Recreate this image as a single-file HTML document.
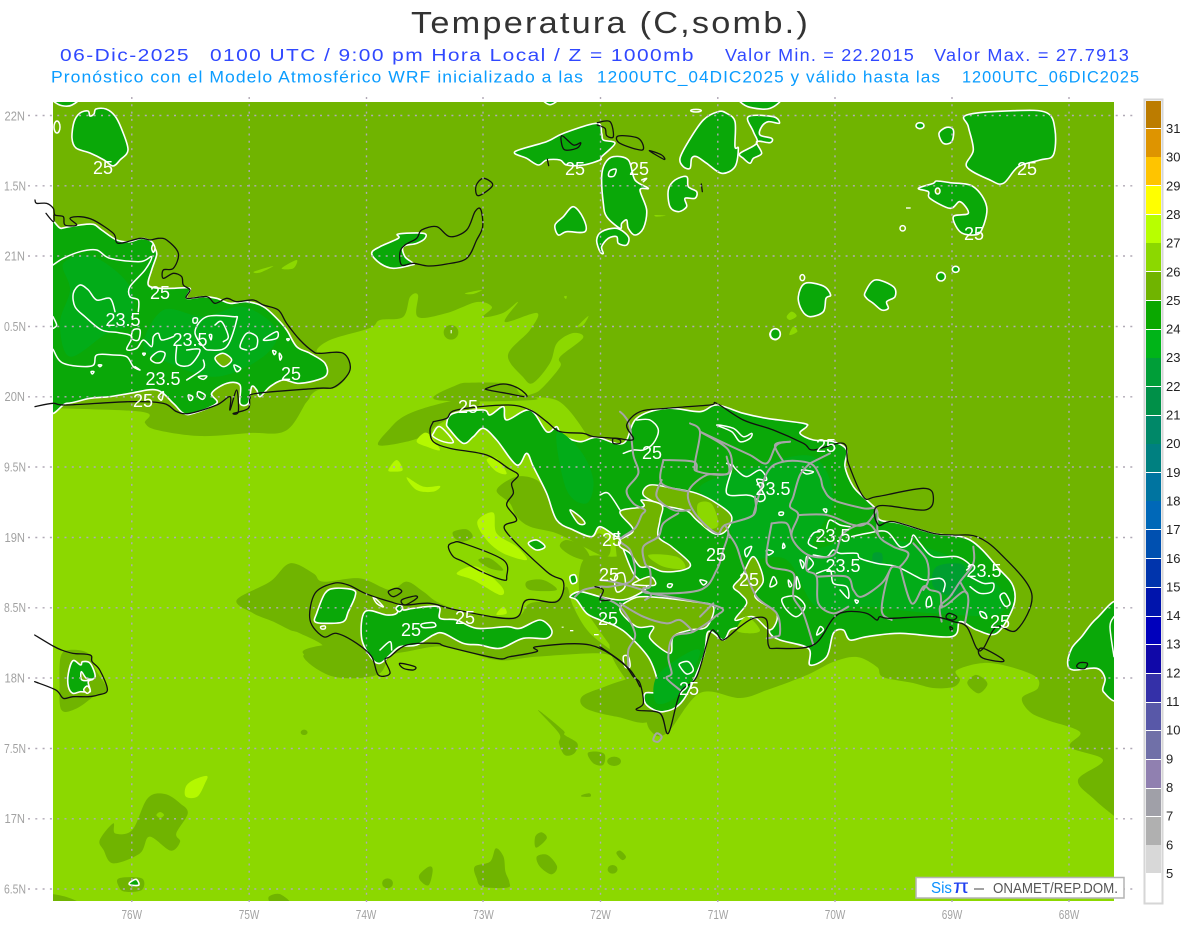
<!DOCTYPE html>
<html>
<head>
<meta charset="utf-8">
<title>Temperatura (C,somb.)</title>
<style>
html,body{margin:0;padding:0;background:#fff;width:1200px;height:927px;overflow:hidden}
svg{display:block}
svg *{vector-effect:non-scaling-stroke}
text{font-family:"Liberation Sans",sans-serif;vector-effect:none}
.m{fill:#70b400}
.l{fill:#8cd800}
.b{fill:#b4f800}
.gr{fill:#0aa808;stroke:#fff;stroke-width:1.6;stroke-linejoin:round}
.s1{fill:#02ac18}
.s2{fill:#009e30}
.w{fill:none;stroke:#fff;stroke-width:1.5;stroke-linejoin:round;stroke-linecap:round}
.mw{fill:#70b400;stroke:#fff;stroke-width:1.5;stroke-linejoin:round}
.k{fill:none;stroke:#111;stroke-width:1.3;stroke-linejoin:round;stroke-linecap:round}
.g{fill:none;stroke:#a6a6a6;stroke-width:2;stroke-linejoin:round;stroke-linecap:round}
.lab{fill:#fff;font-size:18px;text-anchor:middle}
.ax{fill:#a2a2a2;font-size:12.5px}
.cb{fill:#222;font-size:13px}
</style>
</head>
<body>
<svg width="1200" height="927" viewBox="0 0 1200 927" xmlns="http://www.w3.org/2000/svg">
<defs><clipPath id="plot"><rect x="53" y="102" width="1061" height="799"/></clipPath></defs>
<rect width="1200" height="927" fill="#fff"/>

<text x="411" y="33" font-size="31" fill="#333" letter-spacing="2" textLength="399" lengthAdjust="spacingAndGlyphs">Temperatura (C,somb.)</text>
<g font-size="17.5" fill="#3048ff" letter-spacing="1.2">
<text x="60" y="61" textLength="130" lengthAdjust="spacingAndGlyphs">06-Dic-2025</text>
<text x="210" y="61" textLength="485" lengthAdjust="spacingAndGlyphs">0100 UTC / 9:00 pm Hora Local / Z = 1000mb</text>
<text x="725" y="61" textLength="190" lengthAdjust="spacingAndGlyphs">Valor Min. = 22.2015</text>
<text x="934" y="61" textLength="196" lengthAdjust="spacingAndGlyphs">Valor Max. = 27.7913</text>
</g>
<g font-size="16.8" fill="#0a9cff" letter-spacing="1">
<text x="51" y="82.5" textLength="533" lengthAdjust="spacingAndGlyphs">Pronóstico con el Modelo Atmosférico WRF inicializado a las</text>
<text x="597" y="82.5" textLength="344" lengthAdjust="spacingAndGlyphs">1200UTC_04DIC2025 y válido hasta las</text>
<text x="962" y="82.5" textLength="178" lengthAdjust="spacingAndGlyphs">1200UTC_06DIC2025</text>
</g>

<g clip-path="url(#plot)">
<rect x="53" y="102" width="1061" height="799" class="m"/>
<polygon class="l" points="5,405 53,408 143,412 145,423 157,430 200,436 250,433 287,430 313,393 337,387 350,370 343,353 317,352 330,340 370,328 380,320 403,317 410,297 418,295 418,317 447,313 477,302 492,307 483,317 503,313 518,302 505,322 537,313 530,330 508,355 523,377 533,383 550,363 557,343 573,333 583,338 560,357 560,367 540,390 527,397 560,402 590,440 610,480 615,540 620,600 610,650 640,700 650,730 667,733 700,693 740,698 767,690 807,675 833,662 857,657 877,667 883,677 913,683 933,688 953,687 960,680 957,670 990,663 1033,675 1038,688 1022,698 1030,712 1047,720 1080,732 1070,747 1103,760 1078,780 1095,800 1125,825 1190,880 1190,915 5,915 5,700"/>

<!-- patches : frame 8 -->
<g transform="translate(290 400) scale(.33333)">
<polygon class="m" points="265,135 300,85 340,50 400,25 500,0 560,0 560,20 470,60 430,85 420,100 350,125"/>
<polygon class="m" points="0,-10 60,-10 0,50"/>
<polygon class="m" points="-160,600 -60,545 0,490 70,520 100,545 210,535 300,570 350,545 400,575 450,610 560,645 680,650 720,610 800,600 830,560 850,620 900,700 1000,780 930,760 740,770 620,780 470,740 350,755 300,770 260,825 130,830 40,770 100,740 30,700 0,690 -50,665 -110,640"/>
<polygon class="m" points="620,270 680,230 740,240 770,280 790,320 840,370 900,410 930,400 960,430 950,470 880,440 800,400 720,380 680,350 660,310"/>
<polygon class="m" points="830,420 880,440 900,480 850,470 810,440"/>
<polygon class="m" points="710,545 760,540 800,570 720,570"/>
<polygon class="m" points="880,480 960,470 1050,500 1050,780 1000,780 920,680 870,590"/>
<polygon class="m" points="490,395 530,388 548,410 520,425 495,415"/>
<polygon class="m" points="565,480 600,475 640,510 600,505"/>
<polygon class="b" points="380,125 400,100 420,105 450,150 410,140"/>
<polygon class="b" points="295,210 320,180 338,210 310,215"/>
<polygon class="b" points="350,232 400,260 450,258 430,275 380,270"/>
<polygon class="b" points="562,365 610,338 620,400 680,440 710,480 640,460 590,420"/>
<polygon class="b" points="500,520 560,500 635,560 630,585 550,540"/>
<polygon class="b" points="620,640 640,620 650,640 625,645"/>
<polygon class="b" points="590,180 620,175 650,220 620,215"/>
</g>

<!-- patches : frame 10 -->
<g transform="translate(50 640) scale(.3827 .33333)">
<polygon class="m" points="28,50 50,30 100,40 120,90 150,150 120,165 70,205 30,210 25,130"/>
<polygon class="m" points="130,600 165,550 170,580 215,570 255,475 300,462 340,490 360,520 330,580 340,605 315,632 260,590 235,640 165,670 140,630"/>
<polygon class="l" points="278,525 288,516 298,525 288,534"/>
<polygon class="b" points="355,440 375,420 410,408 405,430 385,470 355,470"/>
<polygon class="m" points="180,715 240,715 240,750 195,755 180,740"/>
<polygon class="m" points="-20,762 40,770 80,795 -20,795"/>
<polygon class="m" points="572,770 600,762 628,790 580,790"/>
<ellipse class="m" cx="664" cy="277" rx="9" ry="8"/>
<polygon class="m" points="1275,210 1340,270 1345,285 1378,310 1370,340 1345,345 1330,310 1330,280"/>
<polygon class="m" points="1405,340 1430,335 1450,345 1445,375 1420,370"/>
<ellipse class="m" cx="1474" cy="364" rx="18" ry="14"/>
<polygon class="m" points="1390,465 1410,460 1412,470 1390,470"/>
<polygon class="m" points="1268,590 1285,577 1298,595 1270,623"/>
<polygon class="m" points="1272,650 1300,645 1325,680 1310,703 1280,680"/>
<polygon class="m" points="1480,640 1490,632 1505,650 1495,660"/>
<ellipse class="m" cx="1470" cy="688" rx="13" ry="13"/>
<polygon class="m" points="1110,680 1150,665 1165,625 1185,650 1190,695 1200,725 1195,743 1130,740 1115,715"/>
<polygon class="m" points="965,705 990,680 1000,690 990,735 970,725"/>
<ellipse class="m" cx="882" cy="730" rx="14" ry="15"/>
<polygon class="m" points="660,35 770,10 830,40 840,80 800,107 750,95"/>
<polygon class="m" points="1390,170 1450,140 1500,120 1568,100 1568,240 1480,230 1400,205"/>
</g>

<!-- patches : frames 7, 9, 11, 12 -->
<g transform="translate(840 560) scale(.33333)">
<polygon class="m" points="382,370 405,345 430,355 442,375 415,400"/>
</g>
<g transform="translate(360 100) scale(.33333)">
<polygon class="m" points="230,900 290,855 340,848 450,852 480,880 520,900"/>
<circle class="m" cx="273" cy="697" r="22"/>
<rect x="272" y="690" width="3" height="10" fill="#fff"/>
<polygon class="l" points="315,580 365,570 340,582"/>
<polygon class="l" points="652,680 685,648 670,675"/>
<polygon class="l" points="885,345 918,347 890,350"/>
<polygon class="l" points="612,590 620,588 618,597"/>
</g>
<g transform="translate(760 100) scale(.33333)">
<polygon class="l" points="80,650 95,635 110,648 90,660"/>
<polygon class="l" points="88,705 100,680 112,695"/>
</g>
<g transform="translate(30 190) scale(.33333)">
<polygon class="l" points="672,245 730,228 690,248"/>
<polygon class="l" points="755,235 800,210 790,235"/>
</g>

<!-- top-left blobs -->
<polygon class="gr" points="72,138 74,122 80,113 88,111 90,116 94,114 96,109 106,109 115,116 122,130 128,150 120,160 113,166 104,160 90,153 76,148"/>
<polygon class="gr" points="50,96 56,103 64,106 72,105 78,98"/>
<ellipse class="w" cx="57" cy="127" rx="3" ry="6"/>

<!-- Cuba -->
<g transform="translate(30 190) scale(.33333)">
<polygon class="gr" points="50,130 95,115 150,105 190,103 215,120 260,150 300,155 335,145 365,155 375,175 380,195 365,240 355,285 390,295 430,295 480,295 470,325 520,320 560,325 600,340 650,335 700,350 740,385 770,420 800,470 840,490 885,520 885,560 810,580 760,570 720,590 690,620 680,600 665,590 655,640 630,640 630,585 590,580 545,610 560,640 490,670 460,670 430,640 380,600 300,610 240,620 180,625 110,640 50,630"/>
<polygon class="s1" points="100,220 190,200 300,290 300,400 230,430 120,500 90,400 120,300"/>
<polygon class="s1" points="400,360 520,380 640,350 740,420 700,500 560,560 420,520 340,470"/>
<polygon class="mw" points="365,175 370,163 375,175 370,187"/>
<polygon class="mw" points="555,505 580,490 605,510 580,530"/>
<polyline class="w" points="69,225 100,205 150,185 200,180 240,205 330,215 365,200 345,240 300,290 300,320 325,330 325,365"/>
<polyline class="w" points="255,365 240,325 200,330 175,300 150,285 130,310 135,350 165,380 215,420 265,428 305,440 290,478 320,475 340,450 365,470 370,440 385,430 395,450 430,440"/>
<polygon class="w" points="310,420 330,420 325,450 305,445"/>
<polyline class="w" points="69,478 100,520 185,528 200,495 250,495 290,500 310,530 330,540 315,530"/>
<polyline class="w" points="440,470 440,520 480,525 510,480 470,480"/>
<polyline class="w" points="520,510 520,535 470,570"/>
<polygon class="w" points="362,505 385,485 405,490 395,515 375,518"/>
<polygon class="w" points="530,380 610,380 620,390 590,470 540,480 520,470 495,425"/>
<polyline class="w" points="555,405 575,395 595,440 580,455"/>
<polyline class="w" points="650,480 630,470 650,430 680,440 680,470 662,480"/>
<polygon class="w" points="700,450 740,425 740,445"/>
<polygon class="w" points="490,385 502,385 500,398 490,398"/>
<polygon class="w" points="538,435 545,435 543,450"/>
<polygon class="w" points="612,525 632,535 620,545"/>
<polygon class="w" points="505,560 530,558 520,568"/>
<polygon class="w" points="505,605 525,615 518,628 503,618"/>
<polygon class="w" points="475,615 488,620 485,630 478,630"/>
<polygon class="w" points="728,482 738,485 733,494"/>
<polygon class="w" points="748,490 755,500 750,510"/>
<polygon class="w" points="770,447 778,447 774,452"/>
<polygon class="w" points="385,620 400,605 395,630"/>
<polygon class="w" points="338,490 346,490 342,496"/>
<polygon class="w" points="205,525 215,525 210,530"/>
<polygon class="w" points="183,545 192,545 187,552"/>
<polyline class="w" points="69,380 80,405 70,415"/>
</g>

<!-- Hispaniola main -->
<g transform="translate(600 400) scale(.33333)">
<polygon class="gr" points="-460,70 -440,40 -350,30 -330,45 -290,20 -280,60 -210,30 -160,95 -130,80 -115,105 -60,125 -10,112 70,130 110,55 200,25 300,35 350,15 430,40 500,55 610,70 620,80 600,100 640,120 700,125 740,150 735,200 760,260 800,300 830,330 840,360 900,370 1000,400 1110,420 1200,510 1240,560 1240,620 1190,700 1130,690 1080,665 1055,710 900,700 800,710 750,720 730,690 700,700 680,770 630,795 625,745 540,720 510,700 505,670 460,655 420,680 390,690 370,720 325,695 310,770 250,900 190,935 140,915 135,880 175,870 150,780 90,710 50,680 0,660 -40,640 -70,600 -90,590 -60,575 0,590 60,600 100,590 140,560 100,520 60,420 55,395 50,410 0,380 -25,410 -80,390 -130,360 -160,280 -200,200 -220,160 -250,195 -310,120 -350,85 -380,110 -410,130 -450,90"/>
<polygon class="s1" points="300,260 470,200 640,170 700,300 640,440 800,410 1000,450 1180,540 1200,640 1000,640 800,620 650,620 560,480 430,470 370,340"/>
<polygon class="s2" points="1010,500 1090,495 1085,555 1060,590 1000,560"/>
<polygon class="s2" points="820,460 845,460 845,490 820,490"/>
<polygon class="s1" points="170,830 260,760 300,760 240,880 170,910"/>
<polygon class="s1" points="-130,100 -60,150 -20,240 -40,310 -100,270"/>

<polygon class="mw" points="130,285 150,255 220,265 290,280 350,310 395,350 375,395 340,400 290,360 265,335 230,325 185,315"/>
<polygon class="mw" points="60,335 130,320 125,300 185,315 180,360 175,410 215,440 270,490 250,510 190,515 150,500 120,500 90,460 60,440 60,420 100,390"/>
<polygon class="l" points="295,310 335,312 355,375 320,385 295,350"/>
<polygon class="l" points="145,465 230,470 255,505 190,500"/>
<polygon class="mw" points="90,600 140,590 280,605 340,620 320,680 270,690 220,710 210,760 150,715 160,680 110,680 60,630"/>
<polygon class="mw" points="405,660 440,610 420,580 400,560 425,530 460,470 490,540 465,590 530,640 510,690 460,650"/>
<polygon class="l" points="410,690 440,650 480,690 450,700"/>
<polygon class="mw" points="70,770 85,770 90,800 75,800"/>
<polygon class="mw" points="100,550 150,530 165,555 110,555"/>

<polygon class="w" points="350,75 395,95 420,125 450,115 455,100 430,110 400,85"/>
<polyline class="w" points="380,190 395,205 380,280 440,285 460,290 480,305 495,290 470,240 500,240 480,210 440,230 410,210 395,190"/>
<polygon class="w" points="605,210 640,215 620,222"/>
<polyline class="w" points="680,385 690,360 720,375 750,380"/>
<polyline class="w" points="650,445 625,430 640,400 660,395"/>
<polyline class="w" points="640,465 680,470 700,450 720,460 770,460 780,475 830,490 890,500 950,530 975,540 1020,535 1035,550 1030,575"/>
<polyline class="w" points="755,410 800,400 860,395 900,440 930,430 940,405 960,430 1000,470 1070,470 1110,495 1100,510"/>
<polyline class="w" points="1110,530 1150,550 1180,550 1175,575 1140,580 1110,560"/>
<polyline class="w" points="650,520 690,510 700,550 740,560 745,595 720,570"/>
<polygon class="w" points="1200,590 1215,580 1230,610 1215,618"/>
<polygon class="w" points="980,600 990,590 995,615 980,620"/>
<polygon class="w" points="1140,635 1155,640 1160,655 1145,650"/>
<polygon class="w" points="560,590 590,590 615,620 590,650 560,630 545,600"/>
<polygon class="w" points="660,680 670,690 650,705"/>
<polygon class="w" points="240,790 265,785 280,810 260,822 240,800"/>
<polygon class="w" points="435,450 455,440 440,470"/>
<polygon class="w" points="300,540 320,545 310,555"/>
<polygon class="w" points="205,552 217,553 212,562 203,560"/>
<polygon class="w" points="600,480 612,490 608,505"/>
<polygon class="w" points="620,470 640,490 620,510"/>
<polygon class="w" points="520,530 530,550 510,560"/>
<polygon class="w" points="565,540 575,555 568,560"/>
<polygon class="w" points="590,530 600,560 590,565"/>
<polygon class="w" points="550,430 555,440 548,445"/>
<polygon class="w" points="500,450 520,455 505,465"/>
<polygon class="w" points="670,328 680,328 678,338"/>
<polygon class="w" points="538,337 550,337 548,345 538,345"/>
<polygon class="w" points="765,600 775,603 770,610"/>
<polyline class="w" points="70,160 100,150 130,150 160,130 175,90 150,60 110,60"/>
<polyline class="w" points="0,285 25,280 60,330"/>
<polygon class="w" points="45,530 70,520 75,560 50,575"/>
</g>

<!-- Haiti south peninsula & north bits -->
<g transform="translate(290 400) scale(.33333)">
<polygon class="gr" points="75,665 80,640 105,580 135,565 190,570 195,590 175,635 160,665 110,670"/>
<polygon class="gr" points="215,715 225,635 290,645 320,640 330,615 340,630 370,625 445,620 450,655 500,660 560,685 650,680 690,685 750,660 785,690 770,715 700,715 630,745 570,735 520,730 460,700 430,705 380,735 330,740 300,765 270,790 245,775"/>
<polygon class="gr" points="715,430 740,420 765,440 740,450"/>
<polygon class="gr" points="840,530 855,525 860,545 845,550"/>
<polygon class="mw" points="840,330 870,350 885,370 865,370"/>
<polygon class="w" points="430,100 450,80 490,125 460,125 430,110"/>
<polygon class="w" points="250,590 280,620 260,610"/>
<polygon class="gr" points="318,625 330,615 338,625 328,635"/>
<polygon class="w" points="92,680 105,678 105,686 95,687"/>
<polygon class="w" points="395,672 430,668 435,680 400,683"/>
<polyline class="w" points="270,750 300,725 305,750"/>
<rect x="815" y="680" width="6" height="3" fill="#fff"/>
<rect x="840" y="690" width="10" height="4" fill="#fff"/>
<rect x="912" y="702" width="14" height="4" fill="#fff"/>
</g>

<!-- northern islands -->
<g transform="translate(360 100) scale(.33333)">
<polygon class="gr" points="35,460 60,440 115,415 115,402 190,400 195,415 170,430 130,440 135,470 160,490 155,495 100,505 60,490"/>
<polygon class="gr" points="465,155 560,125 610,100 710,70 725,100 730,120 765,130 725,170 720,180 670,195 620,195 600,180 560,180 535,195 500,175"/>
<polygon class="gr" points="725,230 735,190 760,170 805,180 825,240 865,265 840,270 860,330 850,385 825,405 805,385 800,360 785,370 780,385 740,350 730,310"/>
<polygon class="gr" points="710,420 725,395 770,385 805,410 800,435 775,430 770,410 745,415 725,440 730,460 720,455"/>
<polygon class="gr" points="585,375 610,350 640,320 670,355 675,395 620,395 595,405"/>
<polygon class="gr" points="925,270 945,240 980,230 985,260 1010,275 1005,295 975,295 980,320 955,335 930,320"/>
<polygon class="gr" points="960,175 985,125 1030,60 1075,35 1100,40 1125,65 1125,140 1135,145 1125,200 1085,220 1040,190 1010,170 995,175 990,205 970,200"/>
<polygon class="gr" points="1130,-15 1260,-10 1230,25 1170,22 1140,5"/>
<polygon class="gr" points="1165,50 1240,50 1258,70 1225,65 1205,80 1200,105 1235,115 1230,128 1190,125 1205,160 1180,175 1170,190 1150,175 1140,160 1190,130 1180,95"/>
<polygon class="gr" points="1230,700 1245,687 1260,700 1250,718 1235,715"/>
<polygon class="gr" points="540,-15 605,-15 570,14"/>
<ellipse class="w" cx="1008" cy="32" rx="16" ry="4"/>
<polygon class="w" points="750,212 768,208 762,228 746,228"/>
<polyline class="w" points="845,240 860,235 850,245"/>
</g>
<g transform="translate(760 100) scale(.33333)">
<polygon class="gr" points="620,45 760,32 860,38 885,90 880,165 840,180 775,200 730,250 690,240 620,200 640,150 625,80"/>
<polygon class="gr" points="475,265 520,250 530,243 570,248 640,260 680,320 665,390 640,405 600,395 580,350 625,340 600,305 570,325 510,295 505,275"/>
<polygon class="gr" points="537,100 560,82 580,90 575,125 550,130"/>
<polygon class="gr" points="115,590 135,550 190,558 212,585 198,595 190,635 150,650 125,630"/>
<polygon class="gr" points="315,578 345,540 400,560 405,590 380,605 385,625 365,630 340,610 320,595"/>
<ellipse class="gr" cx="480" cy="77" rx="12" ry="9"/>
<ellipse class="mw" cx="533" cy="273" rx="7" ry="9"/>
<ellipse class="mw" cx="428" cy="385" rx="8" ry="8"/>
<ellipse class="gr" cx="543" cy="530" rx="13" ry="13"/>
<ellipse class="gr" cx="587" cy="508" rx="10" ry="9"/>
<ellipse class="mw" cx="127" cy="533" rx="7" ry="9"/>
<ellipse class="gr" cx="46" cy="702" rx="15" ry="16"/>
<rect x="438" y="322" width="14" height="4" fill="#fff"/>
</g>
<!-- right edge -->
<g transform="translate(840 560) scale(.33333)">
<polygon class="gr" points="840,135 770,175 725,230 695,265 683,310 700,330 770,325 795,355 790,395 840,405"/>
<polyline class="w" points="822,170 810,200 822,290"/>
<polygon class="k" points="710,318 720,308 742,310 735,325 718,325"/>
</g>
<!-- Jamaica -->
<g transform="translate(50 640) scale(.3827 .33333)">
<polygon class="gr" points="48,100 60,62 80,75 85,65 105,70 118,110 100,125 105,155 80,155 60,160 48,140"/>
<polygon class="mw" points="88,150 97,138 105,150 98,160"/>
<polygon class="mw" points="82,95 95,115 112,118 95,122 82,118"/>
<polygon class="gr" points="208,728 225,718 232,735 210,735"/>
</g>
</g>

<!-- provincial borders -->
<g transform="translate(600 400) scale(.33333)">
<polyline class="g" points="60,35 75,50 90,80 100,165 115,220 80,270 100,310 135,330 125,345 105,385 60,420 90,450 105,510 90,545 30,560 0,560 -50,570 -75,590"/>
<polyline class="g" points="270,70 300,95 285,190 295,215 385,220 385,150 300,95"/>
<polyline class="g" points="300,95 385,135 450,165 500,190 530,135 570,125"/>
<polyline class="g" points="380,170 385,220 320,225 265,275 285,340 350,400 375,375 460,345 465,290"/>
<polyline class="g" points="190,180 280,185 290,210"/>
<polyline class="g" points="190,180 185,250 265,275"/>
<polyline class="g" points="185,240 170,290 220,330 270,330"/>
<polyline class="g" points="235,340 190,370 175,410 130,440 135,490 150,510 150,560 130,565 150,580 300,570 350,510 370,450 385,400 375,375"/>
<polyline class="g" points="385,400 410,440 430,500 470,590 530,640 540,700 525,710 500,715"/>
<polyline class="g" points="460,345 500,220 550,185 630,190 660,230 670,265 700,300 790,325 830,330 835,405 880,440 925,460 900,500 870,510 845,630 875,660"/>
<polyline class="g" points="550,185 525,135 570,125"/>
<polyline class="g" points="630,190 660,175 690,160"/>
<polyline class="g" points="630,190 600,225 580,290 570,320 595,345 575,410 625,465 700,465 730,400 800,370 835,405"/>
<polyline class="g" points="595,345 680,345 760,375 800,370 830,330"/>
<polyline class="g" points="515,370 560,370 575,410"/>
<polyline class="g" points="515,370 500,460 510,500 580,520 580,590 610,640 640,735"/>
<polyline class="g" points="625,465 620,510 650,530 655,610 700,640 745,620"/>
<polyline class="g" points="650,530 740,530 760,570 785,590 845,550 870,510"/>
<polyline class="g" points="900,500 935,610 970,560 990,570 1020,580 1030,620 1090,575 1105,600 1095,670"/>
<polyline class="g" points="940,430 980,480 985,540 970,570"/>
<polyline class="g" points="1120,440 1120,490 1080,545 1050,590 1020,620 1025,665"/>
<polyline class="g" points="1080,545 1100,580"/>
<polyline class="g" points="0,540 60,550 150,580 135,600"/>
<polyline class="g" points="150,580 355,620 345,650 280,695 220,710 205,770 215,820 200,835 240,870"/>
<polyline class="g" points="60,610 130,650 200,670 240,660 280,695"/>
<polyline class="g" points="340,610 300,650"/>
<polyline class="g" points="0,590 60,620 105,700 85,750 85,800"/>
<polygon class="g" points="160,1020 170,1000 185,1010 175,1025"/>
</g>

<!-- coasts -->
<g transform="translate(30 190) scale(.33333)">
<polyline class="k" points="15,650 69,640 110,645 300,635 400,640 440,665 480,670 560,645 600,620 600,660 620,600 625,665 610,670 655,655 660,625 680,610 860,595 915,590 960,540 940,490 870,490 850,485 810,450 770,400 745,360 700,345 670,330 620,335 590,325 555,340 530,320 470,325 480,300 460,285 455,260 430,250 400,265 400,240 430,235 445,190 410,150 385,145 360,150 330,145 265,160 250,130 190,90 150,80 120,85 140,105 105,105 100,80 75,75 70,55 50,40 20,40 15,30"/>
<polyline class="k" points="48,70 70,95 72,75"/>
</g>
<g transform="translate(600 400) scale(.33333)">
<polyline class="k" points="-500,65 -460,55 -430,30 -280,15 -210,30 -160,65 -120,95 -50,100 -20,110 50,115 100,118 80,75 120,35 200,25 330,15 350,10 430,60 520,90 610,130 640,150 730,130 745,190 790,290 830,290 970,265 1000,290 975,330 835,318 835,375 880,365 1000,400 1060,405 1130,410 1200,460 1295,580 1250,690 1190,680 1150,745 1130,745 1100,680 1060,665 1000,650 870,655 840,650 830,660 800,640 740,635 700,655 640,735 530,745 505,735 500,660 460,655 420,680 370,720 350,700 330,700 290,830 240,880 205,1000 180,940 110,930 130,910 120,850 100,830 70,790 0,740"/>
<polygon class="k" points="1135,755 1150,745 1205,775 1205,785 1150,775"/>
<polygon class="k" points="1040,645 1050,640 1070,650 1060,660 1040,655"/>
<polygon class="k" points="1050,680 1058,685 1052,690"/>
<polygon class="k" points="40,115 60,120 60,130 40,130"/>
</g>
<g transform="translate(290 400) scale(.33333)">
<polyline class="k" points="1050,860 1010,800 900,735 740,740 740,755 660,770 620,775 470,740 440,730 350,735 300,770 285,780 300,820 265,825 245,770 200,730 140,700 100,710 60,660 75,580 130,550 175,555 225,580 300,605 345,615 420,610 500,630 670,655 710,600 800,605 820,545 770,515 645,390 680,360 650,315 670,280 665,250 685,225 655,205 590,165 480,145 430,125 420,90 430,65"/>
<polygon class="k" points="475,440 490,428 520,430 640,480 650,530 640,540 575,515 520,485 490,470"/>
<polygon class="k" points="295,575 320,565 335,575 310,590"/>
<polygon class="k" points="335,600 375,588 380,595 345,615"/>
<polygon class="k" points="330,790 375,800 370,810 340,805"/>
<polyline class="k" points="915,560 940,570 930,600 960,600"/>
</g>
<g transform="translate(360 100) scale(.33333)">
<polygon class="k" points="120,457 135,435 170,415 185,390 230,380 270,410 320,390 345,335 362,328 368,380 350,420 320,475 260,492 205,498 160,490 125,495"/>
<polygon class="k" points="348,258 370,235 398,256 355,287"/>
<polygon class="k" points="605,107 640,135 662,128 650,145 612,148"/>
<polyline class="k" points="712,68 750,65 760,110 740,107 735,85 712,75"/>
<polygon class="k" points="775,108 835,115 847,150 780,130"/>
<polygon class="k" points="868,152 905,165 912,178"/>
<polyline class="k" points="562,178 566,197"/>
<polyline class="k" points="1024,252 1027,275"/>
<polygon class="k" points="380,865 430,852 475,865 500,890 440,880 385,870"/>
</g>
<g transform="translate(50 640) scale(.3827 .33333)">
<polyline class="k" points="-40,-15 8,18 30,30 60,40 105,45 110,65 130,90 150,150 125,165 100,170 60,170 35,175 15,150 -40,125"/>
</g>

<!-- dotted grid -->
<g stroke="#b0a9b6" stroke-width="1.4" stroke-dasharray="2 5.3" fill="none">
<path d="M28 115.5H1134M28 185.8H1134M28 256H1134M28 326.5H1134M28 396.8H1134M28 467H1134M28 537.5H1134M28 607.8H1134M28 678H1134M28 748.5H1134M28 818.8H1134M28 889H1134"/>
<path d="M131.8 97V907M249.2 97V907M366.5 97V907M483 97V907M600.5 97V907M717.8 97V907M835 97V907M952 97V907M1069 97V907"/>
</g>

<!-- contour labels -->
<g>
<text class="lab" x="103" y="174">25</text>
<text class="lab" x="160" y="299">25</text>
<text class="lab" x="143" y="407">25</text>
<text class="lab" x="291" y="380">25</text>
<text class="lab" x="123" y="326">23.5</text>
<text class="lab" x="190" y="346">23.5</text>
<text class="lab" x="163" y="385">23.5</text>
<text class="lab" x="575" y="175">25</text>
<text class="lab" x="639" y="175">25</text>
<text class="lab" x="1027" y="175">25</text>
<text class="lab" x="974" y="240">25</text>
<text class="lab" x="468" y="413">25</text>
<text class="lab" x="652" y="459">25</text>
<text class="lab" x="826" y="452">25</text>
<text class="lab" x="773" y="495">23.5</text>
<text class="lab" x="833" y="542">23.5</text>
<text class="lab" x="843" y="572">23.5</text>
<text class="lab" x="984" y="577">23.5</text>
<text class="lab" x="612" y="546">25</text>
<text class="lab" x="716" y="561">25</text>
<text class="lab" x="609" y="581">25</text>
<text class="lab" x="749" y="586">25</text>
<text class="lab" x="608" y="625">25</text>
<text class="lab" x="1000" y="628">25</text>
<text class="lab" x="689" y="695">25</text>
<text class="lab" x="411" y="636">25</text>
<text class="lab" x="465" y="624">25</text>
</g>

<!-- axes -->
<g class="ax">
<text x="4.5" y="120.5" textLength="20.5" lengthAdjust="spacingAndGlyphs">22N</text>
<text x="4" y="190.5" textLength="22" lengthAdjust="spacingAndGlyphs">1.5N</text>
<text x="4.5" y="260.5" textLength="20.5" lengthAdjust="spacingAndGlyphs">21N</text>
<text x="4" y="331" textLength="22" lengthAdjust="spacingAndGlyphs">0.5N</text>
<text x="4.5" y="401" textLength="20.5" lengthAdjust="spacingAndGlyphs">20N</text>
<text x="4" y="471.5" textLength="22" lengthAdjust="spacingAndGlyphs">9.5N</text>
<text x="4.5" y="542" textLength="20.5" lengthAdjust="spacingAndGlyphs">19N</text>
<text x="4" y="612" textLength="22" lengthAdjust="spacingAndGlyphs">8.5N</text>
<text x="4.5" y="682.5" textLength="20.5" lengthAdjust="spacingAndGlyphs">18N</text>
<text x="4" y="753" textLength="22" lengthAdjust="spacingAndGlyphs">7.5N</text>
<text x="4.5" y="823" textLength="20.5" lengthAdjust="spacingAndGlyphs">17N</text>
<text x="4" y="893.5" textLength="22" lengthAdjust="spacingAndGlyphs">6.5N</text>
</g>
<g class="ax">
<text x="121.5" y="919" textLength="20.5" lengthAdjust="spacingAndGlyphs">76W</text>
<text x="238.8" y="919" textLength="20.5" lengthAdjust="spacingAndGlyphs">75W</text>
<text x="355.8" y="919" textLength="20.5" lengthAdjust="spacingAndGlyphs">74W</text>
<text x="473.3" y="919" textLength="20.5" lengthAdjust="spacingAndGlyphs">73W</text>
<text x="590.3" y="919" textLength="20.5" lengthAdjust="spacingAndGlyphs">72W</text>
<text x="707.8" y="919" textLength="20.5" lengthAdjust="spacingAndGlyphs">71W</text>
<text x="824.8" y="919" textLength="20.5" lengthAdjust="spacingAndGlyphs">70W</text>
<text x="941.8" y="919" textLength="20.5" lengthAdjust="spacingAndGlyphs">69W</text>
<text x="1058.8" y="919" textLength="20.5" lengthAdjust="spacingAndGlyphs">68W</text>
</g>

<!-- colour bar -->
<rect x="1144.5" y="99.5" width="18" height="804" fill="#fff" stroke="#d6d6d6" stroke-width="2"/>
<g>
<rect x="1146" y="101" width="15" height="27" fill="#bc7c00"/>
<rect x="1146" y="129" width="15" height="28" fill="#de9400"/>
<rect x="1146" y="157" width="15" height="28" fill="#ffc400"/>
<rect x="1146" y="186" width="15" height="28" fill="#ffff00"/>
<rect x="1146" y="215" width="15" height="28" fill="#b8ff00"/>
<rect x="1146" y="243" width="15" height="28" fill="#8cd800"/>
<rect x="1146" y="272" width="15" height="28" fill="#70b400"/>
<rect x="1146" y="301" width="15" height="28" fill="#0aa800"/>
<rect x="1146" y="330" width="15" height="28" fill="#00b418"/>
<rect x="1146" y="358" width="15" height="28" fill="#009e38"/>
<rect x="1146" y="387" width="15" height="28" fill="#009048"/>
<rect x="1146" y="416" width="15" height="28" fill="#008868"/>
<rect x="1146" y="444" width="15" height="28" fill="#008080"/>
<rect x="1146" y="473" width="15" height="28" fill="#0074a0"/>
<rect x="1146" y="501" width="15" height="28" fill="#0068b8"/>
<rect x="1146" y="530" width="15" height="28" fill="#0050b0"/>
<rect x="1146" y="559" width="15" height="28" fill="#0034ac"/>
<rect x="1146" y="588" width="15" height="28" fill="#0014ac"/>
<rect x="1146" y="617" width="15" height="27" fill="#0000bc"/>
<rect x="1146" y="645" width="15" height="28" fill="#1008a8"/>
<rect x="1146" y="674" width="15" height="28" fill="#3430a8"/>
<rect x="1146" y="703" width="15" height="27" fill="#5858a8"/>
<rect x="1146" y="731" width="15" height="28" fill="#7070a8"/>
<rect x="1146" y="760" width="15" height="28" fill="#9080b0"/>
<rect x="1146" y="789" width="15" height="27" fill="#a0a0a8"/>
<rect x="1146" y="817" width="15" height="28" fill="#b0b0b0"/>
<rect x="1146" y="845" width="15" height="28" fill="#d8d8d8"/>
<rect x="1146" y="874" width="15" height="28" fill="#ffffff"/>
</g>
<g class="cb">
<text x="1166" y="133">31</text>
<text x="1166" y="161.7">30</text>
<text x="1166" y="190.3">29</text>
<text x="1166" y="219">28</text>
<text x="1166" y="247.6">27</text>
<text x="1166" y="276.3">26</text>
<text x="1166" y="304.9">25</text>
<text x="1166" y="333.6">24</text>
<text x="1166" y="362.2">23</text>
<text x="1166" y="390.9">22</text>
<text x="1166" y="419.5">21</text>
<text x="1166" y="448.2">20</text>
<text x="1166" y="476.8">19</text>
<text x="1166" y="505.5">18</text>
<text x="1166" y="534.1">17</text>
<text x="1166" y="562.8">16</text>
<text x="1166" y="591.4">15</text>
<text x="1166" y="620.1">14</text>
<text x="1166" y="648.7">13</text>
<text x="1166" y="677.4">12</text>
<text x="1166" y="706">11</text>
<text x="1166" y="734.7">10</text>
<text x="1166" y="763.3">9</text>
<text x="1166" y="792">8</text>
<text x="1166" y="820.6">7</text>
<text x="1166" y="849.3">6</text>
<text x="1166" y="878">5</text>
</g>

<!-- credit box -->
<rect x="916" y="877.5" width="208" height="20.5" fill="#fff" stroke="#b4b4b4" stroke-width="1.5"/>
<text x="931" y="893" font-size="15.5" fill="#0a90ff" textLength="21" lengthAdjust="spacingAndGlyphs">Sis</text>
<text x="953" y="893" font-size="19" fill="#2040f0" textLength="16" lengthAdjust="spacingAndGlyphs">π</text>
<text x="974" y="893" font-size="15" fill="#444" textLength="10" lengthAdjust="spacingAndGlyphs">–</text>
<text x="993" y="893" font-size="15" fill="#555" textLength="125" lengthAdjust="spacingAndGlyphs">ONAMET/REP.DOM.</text>
</svg>
<script>
(function(){
var NS="http://www.w3.org/2000/svg";
var els=document.querySelectorAll("svg polygon,svg polyline");
for(var i=0;i<els.length;i++){
  var el=els[i],closed=el.tagName.toLowerCase()==="polygon";
  var n=el.getAttribute("points").trim().split(/\s+/).map(function(s){var a=s.split(",");return[+a[0],+a[1]]});
  var c=n.length;if(c<3)continue;
  var P=function(j){return closed?n[(j+c)%c]:n[Math.max(0,Math.min(c-1,j))]};
  var d="M"+n[0][0]+" "+n[0][1],end=closed?c:c-1;
  for(var j=0;j<end;j++){
    var p0=P(j-1),p1=P(j),p2=P(j+1),p3=P(j+2);
    d+="C"+(p1[0]+(p2[0]-p0[0])/6).toFixed(1)+" "+(p1[1]+(p2[1]-p0[1])/6).toFixed(1)+" "+(p2[0]-(p3[0]-p1[0])/6).toFixed(1)+" "+(p2[1]-(p3[1]-p1[1])/6).toFixed(1)+" "+p2[0]+" "+p2[1];
  }
  if(closed)d+="Z";
  var path=document.createElementNS(NS,"path");
  path.setAttribute("class",el.getAttribute("class"));
  path.setAttribute("d",d);
  el.parentNode.replaceChild(path,el);
}
})();
</script>
</body>
</html>
